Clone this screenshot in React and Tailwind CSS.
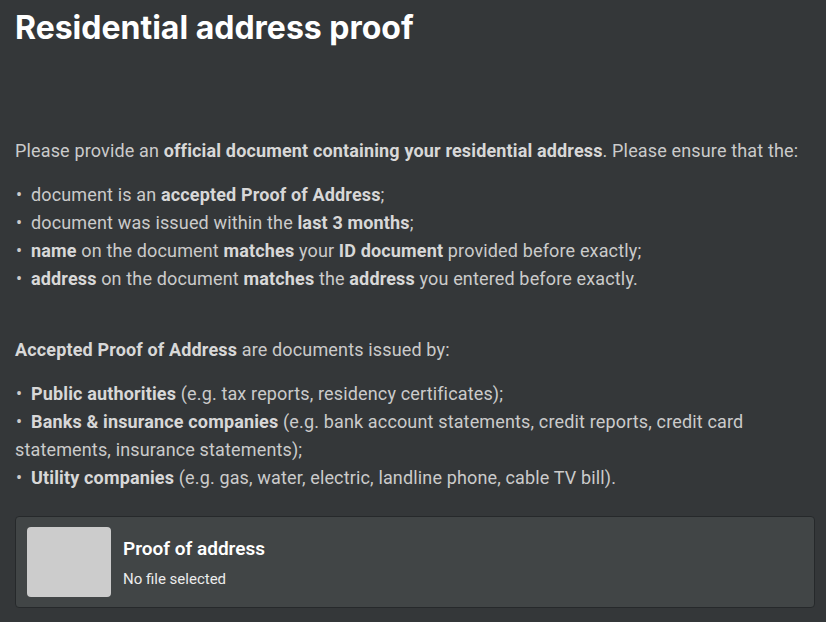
function Bullet() {
  return <span className="inline-block w-[16px] pl-[1px]">•</span>;
}

export default function App() {
  const body = { fontFamily: "Roboto, 'Liberation Sans', sans-serif" };
  return (
    <div className="min-h-[622px] w-full bg-[#343739] pl-[15px] pr-[11px] pt-[8px] pb-[15px] text-[#cbcbcb]" style={body}>
      <h1 className="text-[32px] font-bold leading-[40px] text-white" style={{ fontFamily: "Inter, 'Liberation Sans', sans-serif" }}>
        Residential address proof
      </h1>
      <div className="mt-[89px] text-[18px] leading-[28px] tracking-[0.15px]">
        <p>
          Please provide an <b className="font-bold text-[#d8d8d8]">official document containing your residential address</b>. Please ensure that the:
        </p>
        <div className="mt-[16px]">
          <div><Bullet />document is an <b className="text-[#d8d8d8]">accepted Proof of Address</b>;</div>
          <div><Bullet />document was issued within the <b className="text-[#d8d8d8]">last 3 months</b>;</div>
          <div><Bullet /><b className="text-[#d8d8d8]">name</b> on the document <b className="text-[#d8d8d8]">matches</b> your <b className="text-[#d8d8d8]">ID document</b> provided before exactly;</div>
          <div><Bullet /><b className="text-[#d8d8d8]">address</b> on the document <b className="text-[#d8d8d8]">matches</b> the <b className="text-[#d8d8d8]">address</b> you entered before exactly.</div>
        </div>
        <p className="mt-[43px]">
          <b className="text-[#d8d8d8]">Accepted Proof of Address</b> are documents issued by:
        </p>
        <div className="mt-[16px]">
          <div><Bullet /><b className="text-[#d8d8d8]">Public authorities</b> (e.g. tax reports, residency certificates);</div>
          <div><Bullet /><b className="text-[#d8d8d8]">Banks &amp; insurance companies</b> (e.g. bank account statements, credit reports, credit card statements, insurance statements);</div>
          <div><Bullet /><b className="text-[#d8d8d8]">Utility companies</b> (e.g. gas, water, electric, landline phone, cable TV bill).</div>
        </div>
      </div>
      <div className="mt-[24px] flex items-center gap-[12px] rounded-[4px] border border-[#26292b] bg-[#414546] px-[11px] py-[10px]">
        <div className="h-[70px] w-[84px] shrink-0 rounded-[4px] bg-[#cccccc]" />
        <div className="flex flex-col">
          <div className="text-[19px] font-semibold leading-[26px] text-white">Proof of address</div>
          <div className="mt-[8px] text-[15px] leading-[18px] text-[#ececec]">No file selected</div>
        </div>
      </div>
    </div>
  );
}
